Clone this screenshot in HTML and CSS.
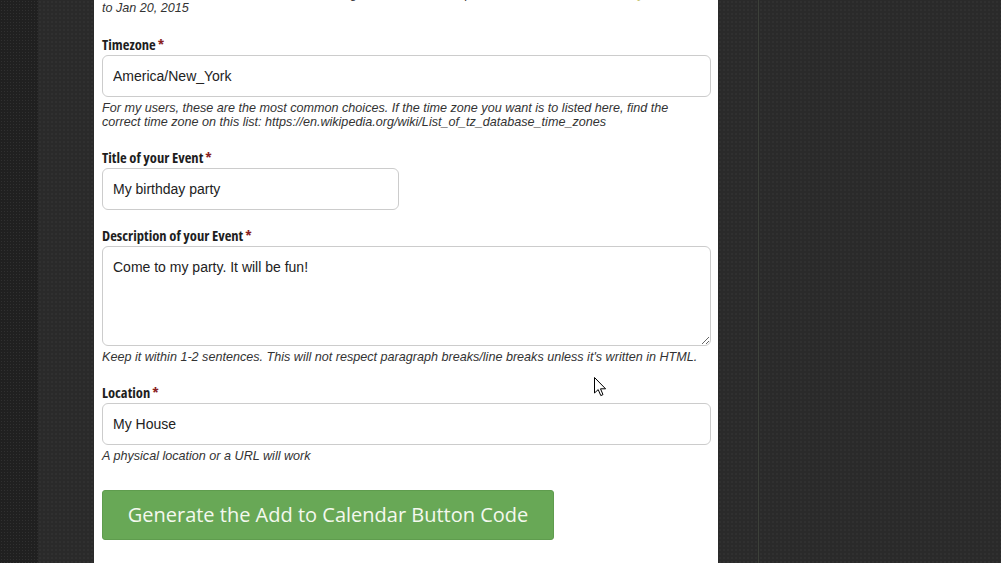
FILE: index.html
```html
<!DOCTYPE html>
<html lang="en">
<head>
<meta charset="utf-8">
<title>Add to Calendar Generator</title>
<link rel="stylesheet" href="styles.css">
</head>
<body>
<div class="page">
  <div class="strip"></div>
  <div class="gutter"></div>
  <main class="panel">
    <p class="help help-top">Enter the end date and time in this format, e.g. Jan 20, 2015 5:00pm, or <span class="hl">leave blank for an all-day event</span><br>to Jan 20, 2015</p>

    <div class="group">
      <label class="label">Timezone<span class="req">*</span></label>
      <input class="field" type="text" value="America/New_York">
      <p class="help">For my users, these are the most common choices. If the time zone you want is to listed here, find the correct time zone on this list: https://en.wikipedia.org/wiki/List_of_tz_database_time_zones</p>
    </div>

    <div class="group">
      <label class="label">Title of your Event<span class="req">*</span></label>
      <input class="field field-short" type="text" value="My birthday party">
    </div>

    <div class="group">
      <label class="label">Description of your Event<span class="req">*</span></label>
      <textarea class="field area">Come to my party. It will be fun!</textarea>
      <p class="help">Keep it within 1-2 sentences. This will not respect paragraph breaks/line breaks unless it's written in HTML.</p>
    </div>

    <div class="group">
      <label class="label">Location<span class="req">*</span></label>
      <input class="field" type="text" value="My House">
      <p class="help">A physical location or a URL will work</p>
    </div>

    <button class="btn" type="button">Generate the Add to Calendar Button Code</button>
  </main>
  <div class="gap"></div>
  <div class="rule"></div>
  <div class="rest"></div>
</div>
<svg class="cursor" width="13" height="20" viewBox="0 0 13 20" aria-hidden="true">
  <path d="M0.5 0.5 L0.5 16 L4.2 12.6 L6.8 18.6 L9 17.6 L6.5 11.8 L11.6 11.8 Z" fill="#fff" stroke="#000" stroke-width="1" stroke-linejoin="miter"/>
</svg>
</body>
</html>
```

FILE: styles.css
```css
html, body {
  margin: 0;
  padding: 0;
  height: 100%;
  overflow: hidden;
}

body {
  background: #2a2a2a;
  font-family: "Liberation Sans", Arial, sans-serif;
  color: #333;
}

.page {
  display: flex;
  height: 563px;
  overflow: hidden;
}

.strip {
  width: 38px;
  flex: none;
  background-color: #202020;
  background-image: radial-gradient(rgba(255,255,255,0.07) 0.6px, transparent 0.8px);
  background-size: 3px 3px;
}

.gutter,
.gap,
.rest {
  background-color: #2a2a2a;
  background-image: radial-gradient(rgba(255,255,255,0.06) 0.6px, transparent 0.8px);
  background-size: 4px 4px;
}

.gutter {
  width: 56px;
  flex: none;
}

.panel {
  width: 609px;
  flex: none;
  display: flex;
  flex-direction: column;
  align-items: flex-start;
  background: #fff;
  padding: 0 7px 0 8px;
}

.gap {
  width: 40px;
  flex: none;
}

.rule {
  width: 1px;
  flex: none;
  background: #3c4039;
}

.rest {
  flex: 1;
}

.help {
  margin: 4px 0 3px;
  max-width: 600px;
  font-size: 12.6px;
  line-height: 14px;
  font-style: italic;
  color: #333;
}

.help-top {
  margin-top: -13px;
  margin-bottom: 0;
  max-width: none;
  white-space: nowrap;
}

.hl {
  color: #c8c77a;
}

.group {
  margin-top: 15px;
  width: 609px;
}

.help-top + .group {
  margin-top: 19px;
}

.label {
  display: block;
  font-family: "Open Sans", sans-serif;
  font-stretch: 75%;
  font-weight: 700;
  font-size: 14.6px;
  line-height: 20px;
  color: #1e1e1e;
  margin-bottom: 1px;
}

.req {
  color: #8a1f1f;
  margin-left: 2px;
}

.field {
  display: block;
  box-sizing: border-box;
  width: 609px;
  height: 42px;
  margin: 0;
  padding: 0 10px;
  border: 1px solid #ccc;
  border-radius: 6px;
  background: #fff;
  font-family: "Liberation Sans", Arial, sans-serif;
  font-size: 14px;
  color: #222;
  outline: none;
}

.field-short {
  width: 297px;
}

.area {
  height: 100px;
  padding: 11px 10px;
  line-height: 18px;
  resize: vertical;
}

.btn {
  display: block;
  margin-top: 24px;
  width: 452px;
  height: 50px;
  padding: 0;
  border: 1px solid #5f9c4e;
  border-radius: 3px;
  background: #68a856;
  color: #f4f8ee;
  font-family: "Open Sans", sans-serif;
  font-size: 20px;
  line-height: 48px;
  text-align: center;
  cursor: pointer;
}

.cursor {
  position: absolute;
  left: 594px;
  top: 377px;
}
```
